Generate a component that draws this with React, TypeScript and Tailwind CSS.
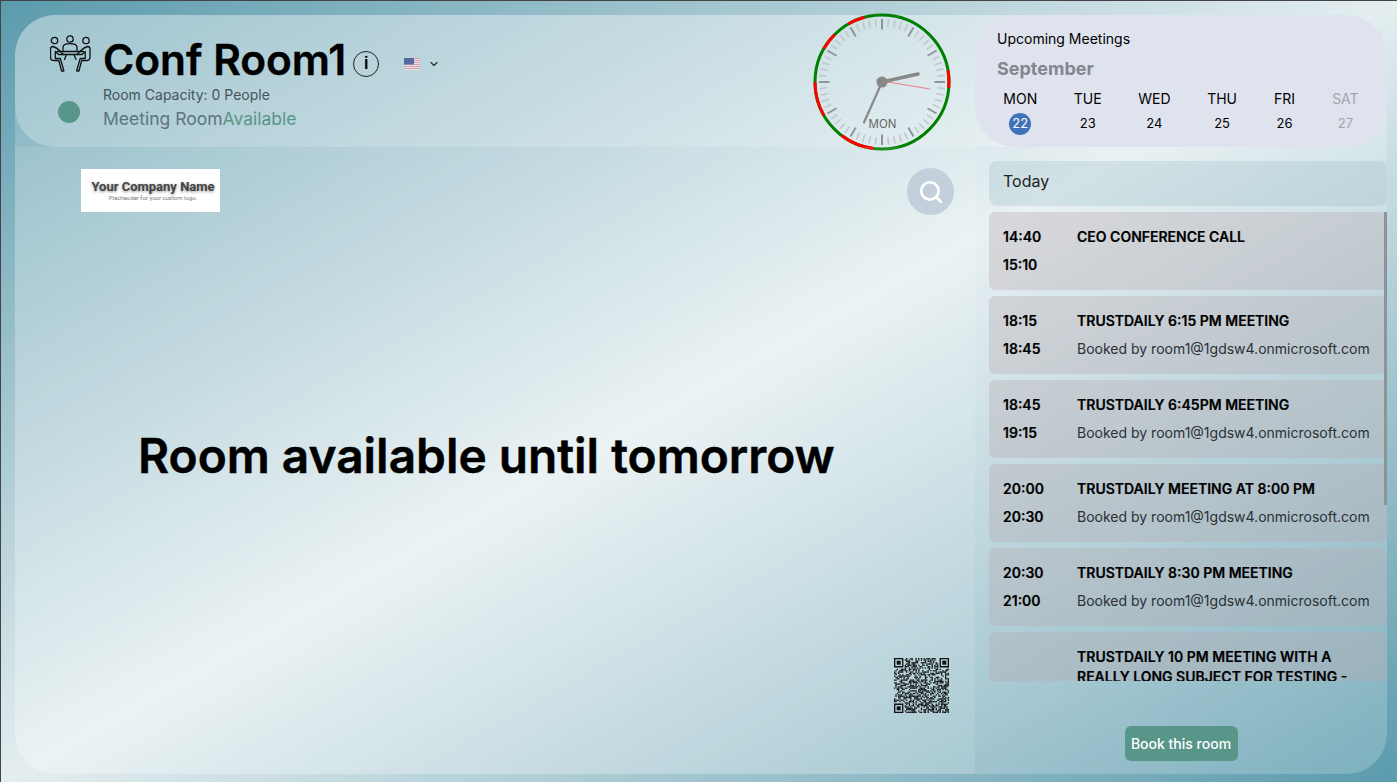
import React from "react";
import { Search, ChevronDown } from "lucide-react";

const meetings = [
  { s: "14:40", e: "15:10", t: "CEO CONFERENCE CALL", b: "" },
  { s: "18:15", e: "18:45", t: "TRUSTDAILY 6:15 PM MEETING", b: "Booked by room1@1gdsw4.onmicrosoft.com" },
  { s: "18:45", e: "19:15", t: "TRUSTDAILY 6:45PM MEETING", b: "Booked by room1@1gdsw4.onmicrosoft.com" },
  { s: "20:00", e: "20:30", t: "TRUSTDAILY MEETING AT 8:00 PM", b: "Booked by room1@1gdsw4.onmicrosoft.com" },
  { s: "20:30", e: "21:00", t: "TRUSTDAILY 8:30 PM MEETING", b: "Booked by room1@1gdsw4.onmicrosoft.com" },
  { s: "", e: "", t: "TRUSTDAILY 10 PM MEETING WITH A REALLY LONG SUBJECT FOR TESTING - PLEASE IGNORE", b: "" },
];

const days = [
  { d: "MON", n: "22", today: true },
  { d: "TUE", n: "23" },
  { d: "WED", n: "24" },
  { d: "THU", n: "25" },
  { d: "FRI", n: "26" },
  { d: "SAT", n: "27", off: true },
];

function pt(r: number, deg: number) {
  const a = ((deg - 90) * Math.PI) / 180;
  return [70 + r * Math.cos(a), 70 + r * Math.sin(a)];
}
function arc(r: number, a: number, b: number) {
  const [x1, y1] = pt(r, a);
  const [x2, y2] = pt(r, b);
  return `M${x1} ${y1}A${r} ${r} 0 0 1 ${x2} ${y2}`;
}

function Clock() {
  const reds: [number, number][] = [[80, 95], [187, 217], [240, 270], [300, 315], [330, 345]];
  return (
    <svg width="140" height="140" viewBox="0 0 140 140" className="-my-[4px] mt-[-2px] shrink-0">
      {Array.from({ length: 60 }).map((_, i) => {
        const major = i % 5 === 0;
        const [x1, y1] = pt(63, i * 6);
        const [x2, y2] = pt(major ? 52.5 : 55.5, i * 6);
        return <line key={i} x1={x1} y1={y1} x2={x2} y2={y2} stroke={major ? "#8f9598" : "#bfc9cc"} strokeWidth={major ? 2 : 1.6} />;
      })}
      <circle cx="70" cy="70" r="67" fill="none" stroke="#008000" strokeWidth="3" />
      {reds.map(([a, b]) => (
        <path key={a} d={arc(67, a, b)} fill="none" stroke="#ff0000" strokeWidth="3" />
      ))}
      <text x="70.5" y="116" textAnchor="middle" fontSize="11.5" fill="#666" fontFamily="Inter, sans-serif">MON</text>
      <line x1="64" y1="68" x2="118" y2="77" stroke="#f08088" strokeWidth="1" />
      <line x1="70" y1="70" x2="52" y2="110.5" stroke="#888" strokeWidth="2.2" strokeLinecap="round" />
      <line x1="70" y1="70" x2="106" y2="62" stroke="#888" strokeWidth="3.5" strokeLinecap="round" />
      <circle cx="70" cy="70" r="5.5" fill="#888" />
    </svg>
  );
}

function RoomIcon() {
  return (
    <svg width="42" height="38" viewBox="0 0 42 38" fill="none" stroke="#111" strokeWidth="1.3" strokeLinejoin="round" strokeLinecap="round" className="shrink-0">
      <circle cx="4.5" cy="5.5" r="3.2" />
      <circle cx="20" cy="4" r="3.2" />
      <circle cx="36" cy="5.5" r="3.2" />
      <path d="M13 16.5v-4c0-2.6 2.6-3.8 7-3.8s7 1.2 7 3.8v4" />
      <path d="M7 16.5h26.5" />
      <path d="M3 11.5c2 .5 5 2.5 8 5.5l2.5 2.5h-5l-3.2-3v7h5l3.5 12" />
      <path d="M3 11.5c-1.5 0-2.5 1-2.5 2.5v8c0 2 1.2 3.5 3.3 3.5h5l2.8 10.5h2.1" />
      <path d="M37.5 11.5c-2 .5-5 2.5-8 5.5l-2.5 2.5h5l3.2-3v7h-5l-3.5 12" />
      <path d="M37.5 11.5c1.5 0 2.5 1 2.5 2.5v8c0 2-1.2 3.5-3.3 3.5h-5l-2.8 10.5h-2.1" />
      <path d="M13.5 19.5h13.5M16.5 19.5l-2 5M24 19.5l2 5" />
    </svg>
  );
}

function Flag() {
  const stripes = [0, 2, 4, 6, 8, 10];
  return (
    <svg width="16" height="12" viewBox="0 0 16 12" className="opacity-80">
      <rect width="16" height="12" fill="#f3e9ea" />
      {stripes.map((y) => <rect key={y} y={y} width="16" height="1" fill="#d9919a" />)}
      <rect width="10" height="6.5" fill="#3c4f8f" />
    </svg>
  );
}

function QR() {
  const n = 41;
  const cells: React.ReactNode[] = [];
  let seed = 12345;
  const inFinder = (x: number, y: number) => (x < 8 && y < 8) || (x >= n - 8 && y < 8) || (x < 8 && y >= n - 8);
  for (let y = 0; y < n; y++) {
    for (let x = 0; x < n; x++) {
      seed = (seed * 1103515245 + 12345) & 0x7fffffff;
      if (!inFinder(x, y) && (seed >> 16) % 2 === 0) {
        cells.push(<rect key={`${x}-${y}`} x={x} y={y} width="1" height="1" />);
      }
    }
  }
  const finder = (x: number, y: number) => (
    <g key={`f${x}${y}`}>
      <path d={`M${x} ${y}h7v7h-7zM${x + 1} ${y + 1}v5h5v-5z`} fillRule="evenodd" />
      <rect x={x + 2} y={y + 2} width="3" height="3" />
    </g>
  );
  return (
    <svg width="55" height="55" viewBox={`0 0 ${n} ${n}`} fill="#111">
      {cells}
      {finder(0, 0)}
      {finder(n - 7, 0)}
      {finder(0, n - 7)}
    </svg>
  );
}

export default function App() {
  return (
    <div className="h-screen w-full overflow-hidden border-t border-l border-[#444] bg-linear-to-br from-[#5a9bad] via-[#e4eef0] to-[#5a9bad] pl-[14px] pr-[10px] pt-[14px] pb-[8px] font-['Inter',sans-serif] text-black">
      <div className="flex h-full flex-col rounded-[40px] bg-white/20">
        <header className="flex h-[132px] shrink-0 rounded-[40px] bg-white/25">
          <div className="flex flex-1 items-start pl-[35px]">
            <div className="flex w-[53px] shrink-0 flex-col pt-[20px]">
              <RoomIcon />
              <span className="mt-[28px] ml-[8px] h-[22px] w-[22px] rounded-full bg-[#58968a]" />
            </div>
            <div className="flex flex-col pt-[20px]">
              <div className="flex items-center">
                <h1 className="text-[42.4px] leading-[50px] font-semibold [-webkit-text-stroke:0.4px_#000]">Conf Room1</h1>
                <span className="mt-[7px] ml-[7px] flex h-[26px] w-[26px] items-center justify-center rounded-full border border-[#222] text-[17px] font-semibold">i</span>
                <span className="mt-[7px] ml-[25px] flex items-center gap-[8px]">
                  <Flag />
                  <ChevronDown size={12} strokeWidth={2.5} color="#333" />
                </span>
              </div>
              <p className="mt-[1px] text-[14px] leading-[18px] text-[#45545c]">Room Capacity: 0 People</p>
              <p className="mt-[1px] text-[17.5px] leading-[27px] text-[#5c7482]">
                Meeting Room<span className="text-[#58968a]">Available</span>
              </p>
            </div>
          </div>
          <div className="mr-[23px] flex items-center">
            <Clock />
          </div>
          <aside className="flex w-[412px] shrink-0 flex-col rounded-[40px] bg-[#dee3ee] px-[10px] pt-[15px]">
            <p className="pl-[12px] text-[14px] leading-[18px]">Upcoming Meetings</p>
            <p className="mt-[10px] pl-[12px] text-[18px] leading-[22px] font-bold text-[#85858f]">September</p>
            <div className="mt-[9px] flex justify-around">
              {days.map((d) => (
                <div key={d.d} className={`flex flex-col items-center ${d.off ? "text-[#a3a5ad]" : ""}`}>
                  <span className="text-[14px] leading-[20px]">{d.d}</span>
                  <span className={`mt-[4px] flex h-[22px] w-[22px] items-center justify-center rounded-full text-[13px] ${d.today ? "bg-[#3f72b8] text-white" : ""}`}>{d.n}</span>
                </div>
              ))}
            </div>
          </aside>
        </header>

        <div className="flex min-h-0 flex-1">
          <main className="flex flex-1 flex-col rounded-bl-[40px] bg-white/10 pt-[22px] pr-[21px] pb-[61px] pl-[66px]">
            <div className="flex items-start justify-between">
              <div className="flex h-[43px] w-[139px] flex-col items-center justify-center bg-white pl-[5px] font-['Roboto',sans-serif]">
                <span className="text-[13px] leading-[14px] font-bold text-[#444] [text-shadow:0_1px_3px_rgba(0,0,0,0.45)]">Your Company Name</span>
                <span className="text-[6px] leading-[8px] text-[#777]">Placheoder for your custom logo.</span>
              </div>
              <button className="-mt-[1px] flex h-[47px] w-[47px] items-center justify-center rounded-full bg-[#c3cfda]">
                <Search size={26} color="#fff" strokeWidth={2.5} />
              </button>
            </div>
            <div className="flex flex-1 items-center pl-[57px]">
              <h2 className="mt-[39px] text-[47.8px] leading-[58px] font-semibold [-webkit-text-stroke:0.5px_#000]">Room available until tomorrow</h2>
            </div>
            <div className="flex justify-end pr-[5px]">
              <QR />
            </div>
          </main>

          <aside className="flex w-[412px] shrink-0 flex-col rounded-br-[40px] pt-[14px] pl-[14px]">
            <div className="flex h-[45px] shrink-0 items-center rounded-[8px] bg-[#8ab3bf]/25 pb-[6px] pl-[14px] text-[16px] text-[#222]">Today</div>
            <div className="relative mt-[6px] flex h-[469px] shrink-0 flex-col gap-[6px] overflow-hidden">
              {meetings.map((m) => (
                <div key={m.t} className="flex h-[78px] shrink-0 rounded-[6px] bg-[#b8a8b0]/35 pt-[15px] pl-[14px]">
                  <div className="flex w-[74px] shrink-0 flex-col text-[14px] leading-[20px] font-semibold [-webkit-text-stroke:0.2px_#000]">
                    <span>{m.s}</span>
                    <span className="mt-[8px]">{m.e}</span>
                  </div>
                  <div className="min-w-0 flex-1 pr-[10px] text-[14px] leading-[20px]">
                    <p className="font-semibold [-webkit-text-stroke:0.2px_#000]">{m.t}</p>
                    {m.b && <p className="mt-[8px] whitespace-nowrap text-[#2a3136]">{m.b}</p>}
                  </div>
                </div>
              ))}
              <span className="absolute top-0 right-0 h-[293px] w-[3px] bg-[#8d9498]" />
            </div>
            <div className="flex flex-1 items-end justify-center pr-[14px] pb-[13px]">
              <button className="h-[35px] w-[113px] rounded-[6px] bg-[#58968a] text-[14px] font-medium text-white">Book this room</button>
            </div>
          </aside>
        </div>
      </div>
    </div>
  );
}
